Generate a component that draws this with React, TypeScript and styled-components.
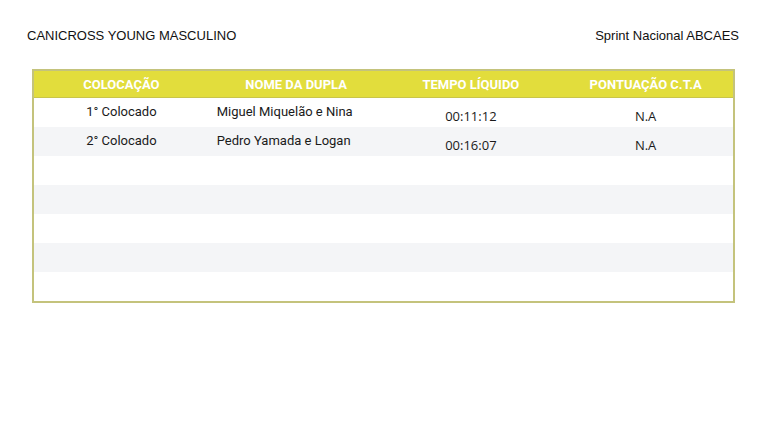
import React from "react";
import styled, { createGlobalStyle } from "styled-components";

const Global = createGlobalStyle`
  html, body { margin: 0; padding: 0; background: #ffffff; }
  body { width: 768px; height: 431px; overflow: hidden; }
`;

const Page = styled.div`
  width: 768px;
  height: 431px;
  box-sizing: border-box;
  padding: 27px 29px 0 27px;
  font-family: "Liberation Sans", Arial, sans-serif;
`;

const TopBar = styled.div`
  display: flex;
  justify-content: space-between;
  align-items: center;
  height: 17px;
  font-size: 13px;
  color: #111111;
  margin-bottom: 25px;
`;

const Table = styled.div`
  margin-left: 5px;
  width: 703px;
  box-sizing: border-box;
  border: 2px solid #c4c37c;
  display: flex;
  flex-direction: column;
`;

const HeadRow = styled.div`
  display: grid;
  grid-template-columns: repeat(4, 1fr);
  height: 26px;
  background: #e2dd3c;
  border-bottom: 1px solid #c9c54a;
`;

const HeadCell = styled.div`
  display: flex;
  align-items: center;
  justify-content: center;
  font-family: Roboto, "Liberation Sans", sans-serif;
  font-weight: 700;
  font-size: 13px;
  color: #ffffff;
  padding-top: 1px;
`;

const Row = styled.div<{ $alt: boolean }>`
  display: grid;
  grid-template-columns: repeat(4, 1fr);
  height: 29px;
  background: ${(p) => (p.$alt ? "#f4f5f7" : "#ffffff")};
`;

const Cell = styled.div<{ $low?: boolean; $left?: boolean }>`
  display: flex;
  align-items: ${(p) => (p.$low ? "flex-end" : "center")};
  justify-content: ${(p) => (p.$left ? "flex-start" : "center")};
  padding-left: ${(p) => (p.$left ? "8px" : "0")};
  padding-bottom: ${(p) => (p.$low ? "2px" : "0")};
  margin-top: ${(p) => (p.$low ? "0" : "-3px")};
  font-family: ${(p) => (p.$low ? '"Open Sans", "Noto Sans", sans-serif' : 'Roboto, "Liberation Sans", sans-serif')};
  font-size: 13px;
  color: #1a1a1a;
`;

const rows = [
  { pos: "1° Colocado", name: "Miguel Miquelão e Nina", time: "00:11:12", pts: "N.A" },
  { pos: "2° Colocado", name: "Pedro Yamada e Logan", time: "00:16:07", pts: "N.A" },
  null,
  null,
  null,
  null,
  null,
];

export default function App() {
  return (
    <>
      <Global />
      <Page>
        <TopBar>
          <span>CANICROSS YOUNG MASCULINO</span>
          <span>Sprint Nacional ABCAES</span>
        </TopBar>
        <Table>
          <HeadRow>
            <HeadCell>COLOCAÇÃO</HeadCell>
            <HeadCell>NOME DA DUPLA</HeadCell>
            <HeadCell>TEMPO LÍQUIDO</HeadCell>
            <HeadCell>PONTUAÇÃO C.T.A</HeadCell>
          </HeadRow>
          {rows.map((r, i) => (
            <Row key={i} $alt={i % 2 === 1}>
              {r && (
                <>
                  <Cell>{r.pos}</Cell>
                  <Cell $left>{r.name}</Cell>
                  <Cell $low>{r.time}</Cell>
                  <Cell $low>{r.pts}</Cell>
                </>
              )}
            </Row>
          ))}
        </Table>
      </Page>
    </>
  );
}
